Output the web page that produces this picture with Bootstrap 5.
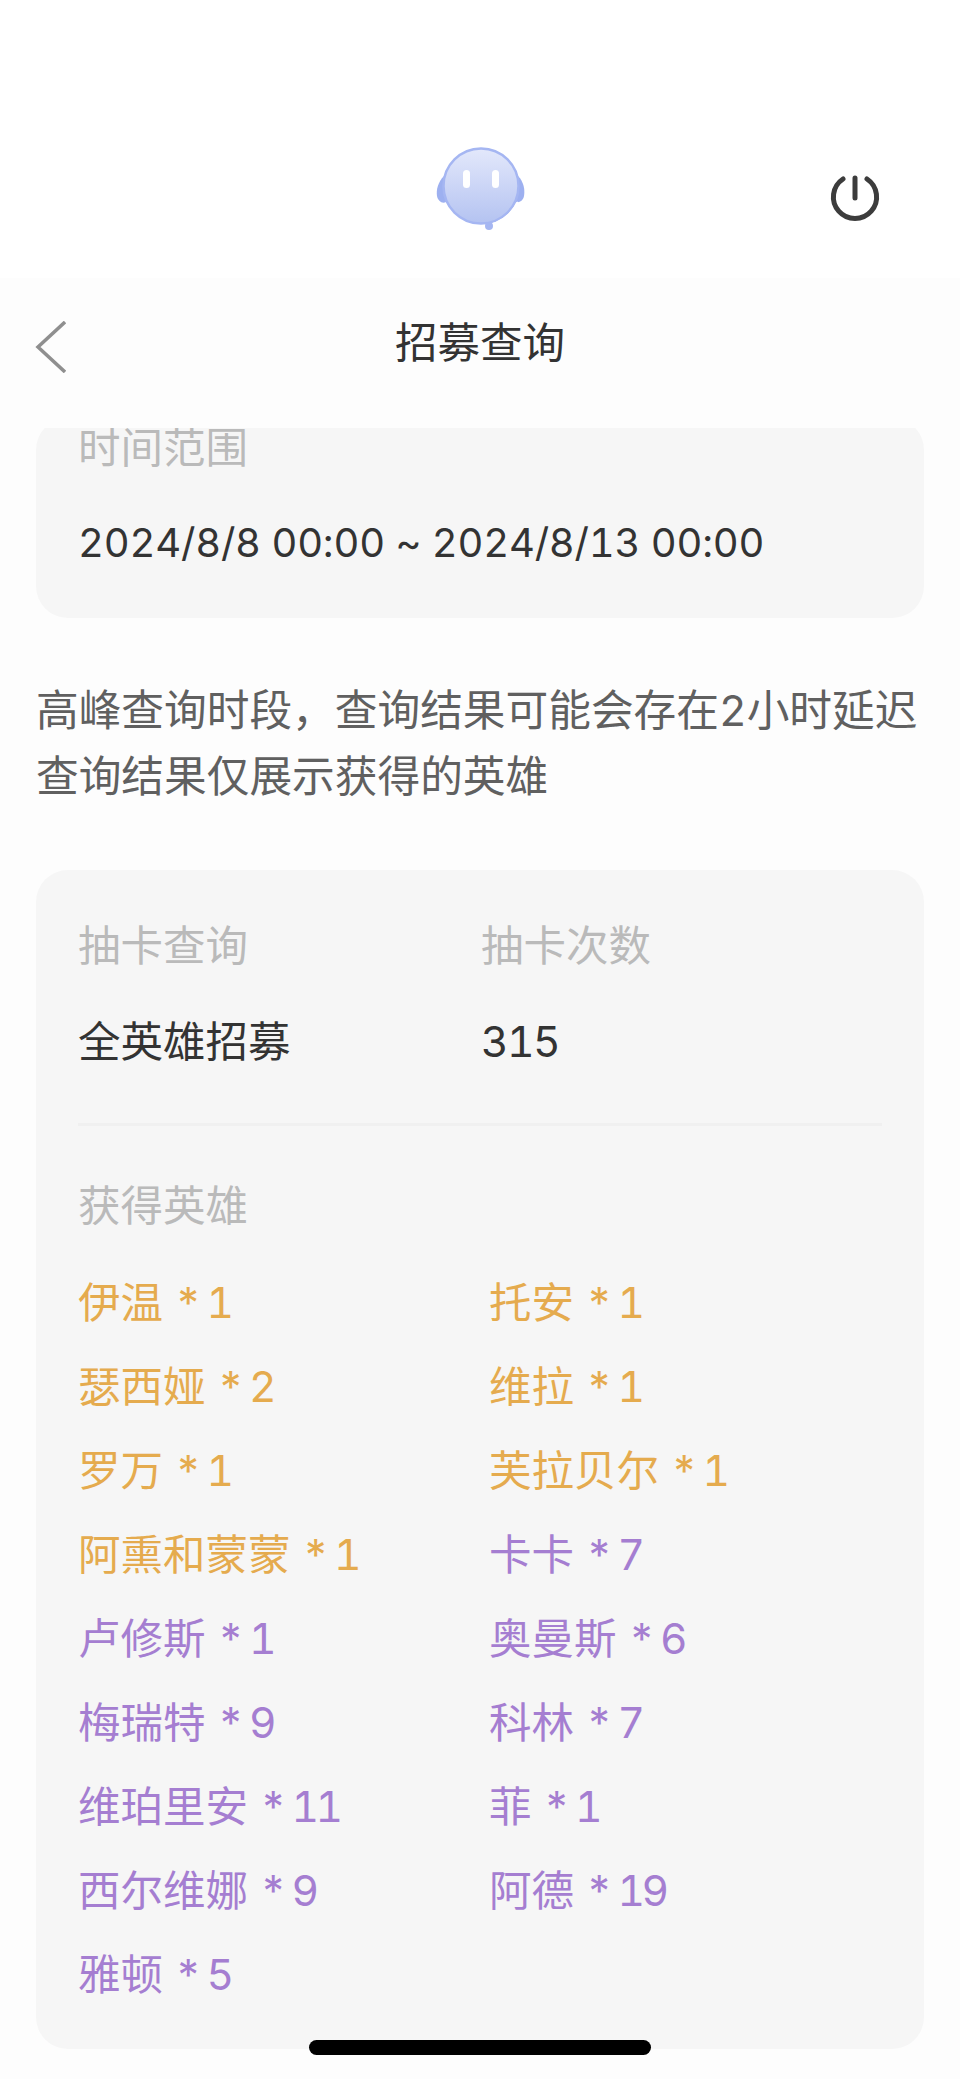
<!DOCTYPE html>
<html lang="zh">
  <head>
    <meta charset="utf-8">
    <title>招募查询</title>
    <link href="https://cdn.jsdelivr.net/npm/bootstrap@5.3.3/dist/css/bootstrap.min.css" rel="stylesheet">
    <style>
      html, body { height: 100%; }
      body {
        position: relative;
        height: 2079px;
        overflow: hidden;
        background: #fdfdfd;
        font-family: Inter, "Noto Sans CJK SC", sans-serif;
        font-size: 42.5px;
        font-variant-numeric: tabular-nums;
        color: #333;
      }
      .top-bar { height: 278px; background: #fff; padding-top: 140px; }
      .top-logo { width: 92px; height: 92px; margin-left: 434px; }
      .top-power { width: 52px; height: 52px; margin-left: 303px; margin-top: 31px; }
      .nav-bar { height: 150px; padding-left: 34px; }
      .back-icon { margin-top: -12px; }
      .nav-title { flex: 1; text-align: center; line-height: 60px; margin-top: -20px; padding-right: 66px; color: #333; }
      .scroll-area { height: 1651px; overflow: hidden; padding: 0 36px; }
      .info-box { background: #f6f6f6; border-radius: 32px; padding: 0 42px; }
      .info-first { margin-top: -10px; height: 200px; }
      .info-label { color: #bababa; line-height: 60px; }
      .date-text { font-size: 40px; letter-spacing: -0.2px; line-height: 60px; margin-top: 35px; color: #333; }
      .note-text { color: #606060; font-size: 42.7px; line-height: 66px; margin: 60px -8px 0 0; white-space: nowrap; }
      .info-main { margin-top: 60px; height: 1179px; padding-top: 46px; }
      .stat-col { width: 403px; }
      .stat-value { line-height: 60px; margin-top: 36px; color: #333; }
      .stat-num { letter-spacing: -1.5px; }
      .rule { height: 3px; background: #f0f0f0; margin: 51px 0 50px; }
      .hero-list { display: grid; grid-template-columns: 411px 1fr; grid-auto-rows: 84px; margin-top: 25px; line-height: 84px; }
      .hero-gold { color: #e5ab4e; }
      .hero-purple { color: #a57ed1; }
      .hero-mult { letter-spacing: -3.5px; }
      .home-bar { position: absolute; left: 309px; top: 2040px; width: 342px; height: 15px; border-radius: 8px; background: #000; }
    </style>
  </head>
  <body>
    <div class="top-bar d-flex align-items-start">
      <svg class="top-logo" viewBox="0 0 92 92">
        <defs>
          <linearGradient id="face" x1="0" y1="0" x2="0" y2="1">
            <stop offset="0" stop-color="#e3e8fb"/>
            <stop offset="1" stop-color="#b4c3f1"/>
          </linearGradient>
          <filter id="soft"><feGaussianBlur stdDeviation="0.7"/></filter>
        </defs>
        <g filter="url(#soft)">
          <path d="M10 36 C4 42 2 50 3 56 C4 61 8 64 12 62 Z" fill="#9db0f0"/>
          <path d="M84 36 C90 42 91 50 90 56 C89 61 85 63 82 62 Z" fill="#9db0f0"/>
          <circle cx="47" cy="46" r="37.5" fill="url(#face)" stroke="#a5b6f2" stroke-width="2.5"/>
          <rect x="29" y="30" width="7" height="18" rx="3.5" fill="#fff"/>
          <rect x="58" y="30" width="7" height="18" rx="3.5" fill="#fff"/>
          <path d="M84 62 C78 74 68 82 55 85" fill="none" stroke="#fff" stroke-width="2"/>
          <circle cx="55" cy="86" r="4" fill="#a5b6f2"/>
        </g>
      </svg>
      <svg class="top-power" viewBox="0 0 52 52" fill="none" stroke="#3c3c3c" stroke-width="5" stroke-linecap="round">
        <path d="M14 8 A21.6 21.6 0 1 0 38 8"/>
        <path d="M26 7 V27"/>
      </svg>
    </div>
    <div class="nav-bar d-flex align-items-center">
      <svg class="back-icon" width="32" height="52" viewBox="0 0 32 52" fill="none" stroke="#8f8f8f" stroke-width="3.5">
        <path d="M31 1 L4 26 L31 51"/>
      </svg>
      <div class="nav-title">招募查询</div>
    </div>
    <div class="scroll-area">
      <div class="info-box info-first">
        <div class="info-label">时间范围</div>
        <div class="date-text">2024/8/8 00:00 ~ 2024/8/13 00:00</div>
      </div>
      <p class="note-text">高峰查询时段，查询结果可能会存在2小时延迟<br>查询结果仅展示获得的英雄</p>
      <div class="info-box info-main">
        <div class="d-flex">
          <div class="stat-col">
            <div class="info-label">抽卡查询</div>
            <div class="stat-value">全英雄招募</div>
          </div>
          <div>
            <div class="info-label">抽卡次数</div>
            <div class="stat-value stat-num">315</div>
          </div>
        </div>
        <div class="rule"></div>
        <div class="info-label">获得英雄</div>
        <div class="hero-list">
          <div class="hero-gold">伊温 <span class="hero-mult">* 1</span></div><div class="hero-gold">托安 <span class="hero-mult">* 1</span></div>
          <div class="hero-gold">瑟西娅 <span class="hero-mult">* 2</span></div><div class="hero-gold">维拉 <span class="hero-mult">* 1</span></div>
          <div class="hero-gold">罗万 <span class="hero-mult">* 1</span></div><div class="hero-gold">芙拉贝尔 <span class="hero-mult">* 1</span></div>
          <div class="hero-gold">阿熏和蒙蒙 <span class="hero-mult">* 1</span></div><div class="hero-purple">卡卡 <span class="hero-mult">* 7</span></div>
          <div class="hero-purple">卢修斯 <span class="hero-mult">* 1</span></div><div class="hero-purple">奥曼斯 <span class="hero-mult">* 6</span></div>
          <div class="hero-purple">梅瑞特 <span class="hero-mult">* 9</span></div><div class="hero-purple">科林 <span class="hero-mult">* 7</span></div>
          <div class="hero-purple">维珀里安 <span class="hero-mult">* 11</span></div><div class="hero-purple">菲 <span class="hero-mult">* 1</span></div>
          <div class="hero-purple">西尔维娜 <span class="hero-mult">* 9</span></div><div class="hero-purple">阿德 <span class="hero-mult">* 19</span></div>
          <div class="hero-purple">雅顿 <span class="hero-mult">* 5</span></div>
        </div>
      </div>
    </div>
    <div class="home-bar"></div>
    <script src="https://cdn.jsdelivr.net/npm/bootstrap@5.3.3/dist/js/bootstrap.bundle.min.js"></script>
  </body>
</html>
